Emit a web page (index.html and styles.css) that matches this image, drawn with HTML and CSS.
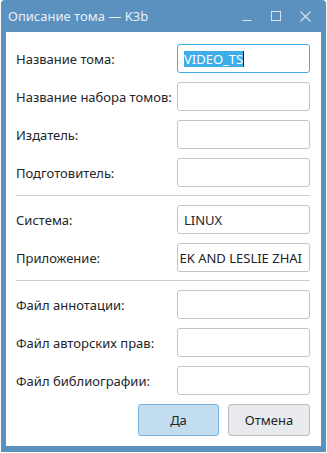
FILE: index.html
```html
<!DOCTYPE html>
<html lang="ru">
<head>
    <meta charset="UTF-8">
    <title>Описание тома — K3b</title>
    <link rel="stylesheet" href="styles.css">
</head>
<body>
    <div class="window">
        <div class="titlebar">
            <span class="title">Описание тома — K3b</span>
            <div class="wm-buttons">
                <svg width="10" height="10" viewBox="0 0 10 10"><path d="M0.5 9.5H9.5" stroke="#d8e4ef" stroke-width="1" fill="none"/></svg>
                <svg width="10" height="10" viewBox="0 0 10 10"><rect x="0.5" y="0.5" width="9" height="9" stroke="#d8e4ef" stroke-width="1" fill="none"/></svg>
                <svg width="11" height="11" viewBox="0 0 11 11"><path d="M0.5 0.5L10.5 10.5M10.5 0.5L0.5 10.5" stroke="#d8e4ef" stroke-width="1.1" fill="none"/></svg>
            </div>
        </div>
        <div class="content">
            <div class="row">
                <label>Название тома:</label>
                <div class="field focus"><span class="sel">VIDEO_TS</span><span class="caret"></span></div>
            </div>
            <div class="row">
                <label>Название набора томов:</label>
                <div class="field"></div>
            </div>
            <div class="row">
                <label>Издатель:</label>
                <div class="field"></div>
            </div>
            <div class="row">
                <label>Подготовитель:</label>
                <div class="field"></div>
            </div>
            <div class="separator"></div>
            <div class="row">
                <label>Система:</label>
                <div class="field"><span class="val">LINUX</span></div>
            </div>
            <div class="row">
                <label>Приложение:</label>
                <div class="field right"><span class="stub"></span><span class="val">EK AND LESLIE ZHAI</span></div>
            </div>
            <div class="separator"></div>
            <div class="row">
                <label>Файл аннотации:</label>
                <div class="field"></div>
            </div>
            <div class="row">
                <label>Файл авторских прав:</label>
                <div class="field"></div>
            </div>
            <div class="row">
                <label>Файл библиографии:</label>
                <div class="field"></div>
            </div>
            <div class="buttons">
                <button class="btn default">Да</button>
                <button class="btn">Отмена</button>
            </div>
        </div>
    </div>
</body>
</html>
```
FILE: styles.css
```css
body {
    margin: 0;
    background: #ffffff;
    font-family: "Noto Sans", "Open Sans", sans-serif;
    font-size: 13px;
    color: #232629;
}

.window {
    margin-left: 1px;
    width: 325px;
    height: 452px;
    background: #5a91bf;
    border-radius: 4px 4px 0 0;
    box-shadow: 0 1px 1px rgba(0, 0, 0, 0.25);
}

.titlebar {
    height: 32px;
    display: flex;
    align-items: center;
    padding: 0 15px 0 7px;
}

.title {
    flex: 1;
    color: #e9eff5;
    font-size: 13px;
    margin-top: -1px;
}

.wm-buttons {
    display: flex;
    align-items: center;
    gap: 19px;
}

.wm-buttons svg {
    display: block;
}

.content {
    margin: 0 5px;
    height: 414px;
    box-sizing: border-box;
    background: #ffffff;
    padding: 12px 11px 10px 10px;
    display: flex;
    flex-direction: column;
    gap: 9px;
}

.row {
    display: flex;
    align-items: center;
    justify-content: space-between;
    height: 29px;
}

.row label {
    white-space: nowrap;
}

.field {
    width: 133px;
    height: 29px;
    box-sizing: border-box;
    border: 1px solid #c3c5c7;
    border-radius: 3px;
    padding: 0 6px;
    display: flex;
    align-items: center;
    background: #ffffff;
}

.field.focus {
    border-color: #3daee9;
}

.field.right {
    justify-content: flex-end;
    padding: 0 7px 0 4px;
    white-space: nowrap;
}

.stub {
    flex: 1;
    height: 1px;
    max-width: 2px;
    margin-top: 8px;
    margin-right: 1px;
    background: #232629;
}

.sel {
    background: #3daee9;
    color: #ffffff;
    line-height: 16px;
}

.caret {
    width: 1px;
    height: 16px;
    background: #232629;
}

.separator {
    height: 1px;
    margin: -1px 0 0 0;
    background: #cbcdcf;
}

.buttons {
    display: flex;
    justify-content: flex-end;
    gap: 9px;
}

.btn {
    width: 82px;
    height: 32px;
    border: 1px solid #b9bbbe;
    border-radius: 3px;
    background: #e9eaed;
    font-family: inherit;
    font-size: 13px;
    color: #232629;
    padding: 0;
}

.btn.default {
    width: 81px;
    background: #c2dcf0;
    border-color: #74b2de;
}
```
